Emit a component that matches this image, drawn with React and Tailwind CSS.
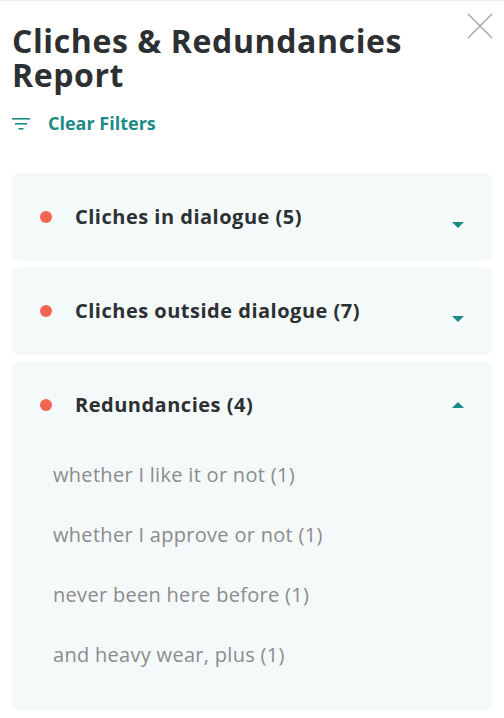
import React, { useState } from "react";

const sections = [
  { title: "Cliches in dialogue (5)", items: [] },
  { title: "Cliches outside dialogue (7)", items: [] },
  {
    title: "Redundancies (4)",
    items: [
      "whether I like it or not (1)",
      "whether I approve or not (1)",
      "never been here before (1)",
      "and heavy wear, plus (1)",
    ],
  },
];

const FilterIcon = () => (
  <svg width="18" height="12" viewBox="0 0 18 12" className="text-[#1c8a86]">
    <rect x="0" y="0" width="18" height="1.6" fill="currentColor" />
    <rect x="3" y="5" width="12" height="1.6" fill="currentColor" />
    <rect x="6.5" y="10" width="5" height="1.6" fill="currentColor" />
  </svg>
);

const Caret = ({ open }) => (
  <svg width="12" height="6" viewBox="0 0 12 6" className="text-[#1c8a86]">
    {open ? (
      <path d="M0 6 L6 0 L12 6 Z" fill="currentColor" />
    ) : (
      <path d="M0 0 L6 6 L12 0 Z" fill="currentColor" />
    )}
  </svg>
);

const Section = ({ section, defaultOpen }) => {
  const [open, setOpen] = useState(defaultOpen);
  return (
    <div className="rounded-lg bg-[#f4f9f9]">
      <button
        onClick={() => setOpen(!open)}
        className="flex w-full items-center pl-7 pr-7 h-[88px] text-left"
      >
        <span className="w-3 h-3 rounded-full bg-[#f26552] shrink-0" />
        <span className="ml-[23px] flex-1 text-[20px] leading-[30px] font-bold tracking-[0.5px] text-[#2d3033]">
          {section.title}
        </span>
        <span className={open ? "" : "mt-4"}>
          <Caret open={open} />
        </span>
      </button>
      {open && (
        <ul className="pl-[41px] pb-[25px] -mt-1">
          {section.items.map((item) => (
            <li
              key={item}
              className="h-[60px] flex items-center text-[20px] tracking-[0.3px] text-[#8c8c8c]"
            >
              {item}
            </li>
          ))}
        </ul>
      )}
    </div>
  );
};

export default function App() {
  return (
    <div
      className="min-h-screen bg-white border-t border-[#ececec] px-3"
      style={{ fontFamily: '"Open Sans", sans-serif' }}
    >
      <div className="flex items-start justify-between pt-[23px]">
        <h1 className="text-[32px] leading-[34px] font-bold text-[#2d3033] tracking-[0.6px]">
          Cliches &amp; Redundancies
          <br />
          Report
        </h1>
        <button className="-mt-[11px] -mr-[1px] text-[#a8a8a8]">
          <svg width="26" height="26" viewBox="0 0 26 26">
            <path d="M1 1 L25 25 M25 1 L1 25" stroke="currentColor" strokeWidth="1.5" />
          </svg>
        </button>
      </div>
      <button className="flex items-center mt-[18px] text-[#1c8a86]">
        <FilterIcon />
        <span className="ml-[18px] text-[18px] leading-[27px] font-bold">Clear Filters</span>
      </button>
      <div className="mt-[36px] flex flex-col gap-[6px]">
        {sections.map((s, i) => (
          <Section key={s.title} section={s} defaultOpen={i === 2} />
        ))}
      </div>
    </div>
  );
}
